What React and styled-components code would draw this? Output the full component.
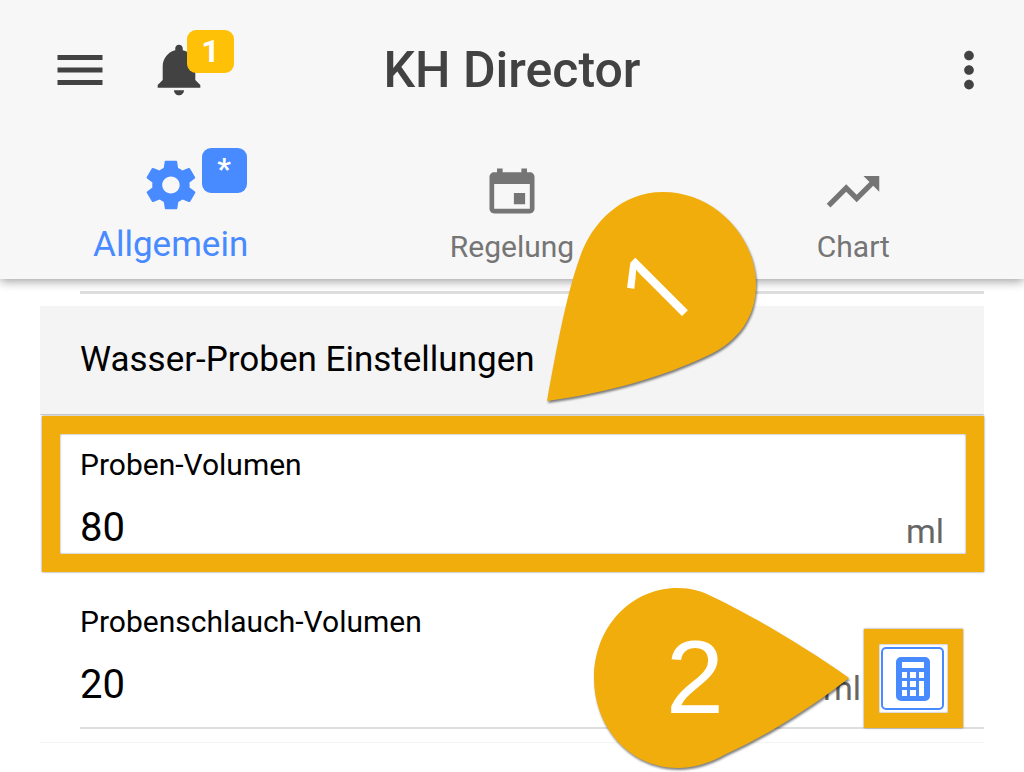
import React from 'react'
import styled, { createGlobalStyle } from 'styled-components'
import {
  IoMdCalendar,
  IoMdMenu,
  IoMdMore,
  IoMdNotifications,
  IoMdSettings,
  IoMdTrendingUp,
} from 'react-icons/io'

const GlobalStyle = createGlobalStyle`
  * {
    box-sizing: border-box;
  }

  body {
    margin: 0;
    background-color: white;
    color: black;
    font-family: Roboto, "Liberation Sans", sans-serif;
  }

  button, input {
    margin: 0;
    padding: 0;
    border: none;
    background: none;
    color: inherit;
    font-family: inherit;
  }

  button {
    cursor: pointer;
  }

  svg {
    display: block;
  }
`

const Header = styled.header`
  position: relative;
  z-index: 1;
  background-color: #f7f7f7;
  box-shadow: 0 2px 10px rgba(0, 0, 0, 0.4);
`

const Toolbar = styled.div`
  display: grid;
  grid-template-columns: 1fr auto 1fr;
  align-items: center;
  height: 140px;
  padding: 0 24px;
  color: #424242;
`

const ToolbarStart = styled.div`
  display: flex;
  align-items: center;
  gap: 38px;
  padding-left: 26px;
`

const ToolbarButton = styled.button`
  position: relative;
  justify-self: end;
`

const Title = styled.h1`
  margin: 0;
  font-size: 50px;
  font-weight: 500;
  line-height: 56px;
`

const Badge = styled.span`
  position: absolute;
  display: flex;
  justify-content: center;
  border-radius: 9px;
  color: white;
  font-weight: 700;
`

const CountBadge = styled(Badge)`
  top: -9px;
  left: 39px;
  width: 47px;
  height: 43px;
  background-color: #ffc107;
  font-size: 32px;
  line-height: 43px;
`

const ChangedBadge = styled(Badge)`
  top: -7px;
  left: 61px;
  width: 45px;
  height: 45px;
  background-color: #488aff;
  font-size: 30px;
  line-height: 42px;
`

const Tabs = styled.nav`
  display: grid;
  grid-template-columns: repeat(3, 1fr);
  height: 139px;
`

const Tab = styled.button`
  display: flex;
  flex-direction: column;
  align-items: center;
  justify-content: flex-end;
  gap: ${props => (props.$active ? '10px' : '8px')};
  padding-bottom: 14px;
  color: ${props => (props.$active ? '#488aff' : '#757575')};
  font-size: ${props => (props.$active ? '35px' : '30px')};
  line-height: ${props => (props.$active ? '40px' : '36px')};
`

const TabIcon = styled.span`
  position: relative;
`

const Content = styled.main`
  padding: 12px 40px 29px;
`

const Divider = styled.hr`
  height: 3px;
  margin: 0 0 12px 40px;
  border: none;
  background-color: #dedede;
`

const Group = styled.section`
  padding-bottom: 13px;
  border-bottom: 1px solid #f4f4f4;
`

const GroupHeader = styled.div`
  position: relative;
  display: flex;
  align-items: center;
  height: 109px;
  padding-left: 40px;
  border-bottom: 1px solid #d0d0d0;
  background-color: #f4f4f4;
`

const GroupTitle = styled.h2`
  margin: 0;
  font-size: 35px;
  font-weight: 400;
  line-height: 40px;
`

const Item = styled.div`
  position: relative;
  padding-left: 40px;
`

const Field = styled.div`
  display: flex;
  flex-direction: column;
  gap: 6px;
  padding: 32px 40px 17px 0;
  border-bottom: 2px solid #dedede;
`

const Label = styled.label`
  font-size: 30px;
  line-height: 36px;
`

const ValueRow = styled.div`
  display: flex;
  align-items: flex-end;
  height: 64px;
`

const ValueInput = styled.input`
  flex: 1;
  min-width: 0;
  height: 50px;
  font-size: 40px;
  line-height: 50px;
  outline: none;
`

const Unit = styled.span`
  color: #666;
  font-size: 34px;
  line-height: 44px;
`

const CalcWrapper = styled.div`
  position: relative;
  margin-left: 20px;
`

const CalcButton = styled.button`
  display: flex;
  align-items: center;
  justify-content: center;
  width: 63px;
  height: 63px;
  border: 2px solid #488aff;
  border-radius: 5px;
  color: #488aff;
`

const Highlight = styled.div`
  position: absolute;
  inset: ${props => props.$inset};
  border: ${props => props.$thickness} solid #f1ad0b;
  box-shadow: 0 0 2px rgba(0, 0, 0, 0.5), inset 0 0 2px rgba(0, 0, 0, 0.5);
  pointer-events: none;
`

const Pin = styled.svg`
  position: absolute;
  z-index: 2;
  overflow: visible;
  pointer-events: none;
  filter: drop-shadow(1px 2px 1px rgba(0, 0, 0, 0.5));

  path {
    fill: #f1ad0b;
  }
`

const FirstPin = styled(Pin)`
  top: -121px;
  left: 500px;
`

const SecondPin = styled(Pin)`
  top: 8px;
  right: 124px;
`

const PinNumber = styled.text`
  fill: white;
  font-family: ${props => props.$font}, sans-serif;
  font-size: 104px;
  font-weight: ${props => props.$weight || 400};
  text-anchor: middle;
`

const CalculatorIcon = () => (
  <svg width="34" height="44" viewBox="0 0 34 44" fill="currentColor" aria-hidden="true">
    <path
      fillRule="evenodd"
      d="M5 0h24a5 5 0 0 1 5 5v34a5 5 0 0 1-5 5H5a5 5 0 0 1-5-5V5a5 5 0 0 1 5-5z
        M6 5v6h22V5z
        M6 15v6h5v-6z M14 15v6h6v-6z M23 15v6h5v-6z
        M6 24v6h5v-6z M14 24v6h6v-6z M23 24v15h5V24z
        M6 33v6h5v-6z M14 33v6h6v-6z"
    />
  </svg>
)

class App extends React.Component {
  state = {
    sampleVolume: '80',
    hoseVolume: '20',
    tab: 'general'
  }

  handleSampleVolume = (event) => {
    this.setState({ sampleVolume: event.target.value })
  }

  handleHoseVolume = (event) => {
    this.setState({ hoseVolume: event.target.value })
  }

  selectTab = (tab) => {
    this.setState({ tab: tab })
  }

  render() {
    const { tab, sampleVolume, hoseVolume } = this.state

    return (
      <>
        <GlobalStyle />
        <Header>
          <Toolbar>
            <ToolbarStart>
              <ToolbarButton aria-label="Menü">
                <IoMdMenu size={60} />
              </ToolbarButton>
              <ToolbarButton aria-label="Benachrichtigungen">
                <IoMdNotifications size={62} />
                <CountBadge>1</CountBadge>
              </ToolbarButton>
            </ToolbarStart>
            <Title>KH Director</Title>
            <ToolbarButton aria-label="Mehr">
              <IoMdMore size={62} />
            </ToolbarButton>
          </Toolbar>
          <Tabs>
            <Tab $active={tab === 'general'} onClick={() => this.selectTab('general')}>
              <TabIcon>
                <IoMdSettings size={60} />
                <ChangedBadge>*</ChangedBadge>
              </TabIcon>
              Allgemein
            </Tab>
            <Tab $active={tab === 'control'} onClick={() => this.selectTab('control')}>
              <TabIcon>
                <IoMdCalendar size={60} />
              </TabIcon>
              Regelung
            </Tab>
            <Tab $active={tab === 'chart'} onClick={() => this.selectTab('chart')}>
              <TabIcon>
                <IoMdTrendingUp size={60} />
              </TabIcon>
              Chart
            </Tab>
          </Tabs>
        </Header>
        <Content>
          <Divider />
          <Group>
            <GroupHeader>
              <GroupTitle>Wasser-Proben Einstellungen</GroupTitle>
              <FirstPin width="225" height="225" viewBox="540 185 225 225">
                <path d="M547 401C557 345 567 293 580 257C592 222 622 192 663 192C714 192 756 236 756 285C756 316 739 341 709 355C660 378 610 392 547 401z" />
                <PinNumber $font='"Open Sans"' $weight={500} transform="translate(683 315) rotate(-45)">1</PinNumber>
              </FirstPin>
            </GroupHeader>
            <Item>
              <Field>
                <Label htmlFor="sample-volume">Proben-Volumen</Label>
                <ValueRow>
                  <ValueInput
                    id="sample-volume"
                    value={sampleVolume}
                    onChange={this.handleSampleVolume}
                  />
                  <Unit>ml</Unit>
                </ValueRow>
              </Field>
              <Highlight $inset="1px 0 0 2px" $thickness="18px" />
            </Item>
            <Item>
              <Field>
                <Label htmlFor="hose-volume">Probenschlauch-Volumen</Label>
                <ValueRow>
                  <ValueInput
                    id="hose-volume"
                    value={hoseVolume}
                    onChange={this.handleHoseVolume}
                  />
                  <Unit>ml</Unit>
                  <CalcWrapper>
                    <CalcButton aria-label="Volumen berechnen">
                      <CalculatorIcon />
                    </CalcButton>
                    <Highlight $inset="-18px -19px -18px -17px" $thickness="15px" />
                  </CalcWrapper>
                </ValueRow>
              </Field>
              <SecondPin width="275" height="192" viewBox="585 580 275 192">
                <path d="M849 678C810 650 755 617 713 597C702 591 690 588 678 588C630 588 594 628 594 678C594 728 630 768 678 768C696 768 712 762 726 754C770 734 810 708 849 678z" />
                <PinNumber $font='"Liberation Sans"' x="695" y="713">2</PinNumber>
              </SecondPin>
            </Item>
          </Group>
        </Content>
      </>
    )
  }
}

export default App
